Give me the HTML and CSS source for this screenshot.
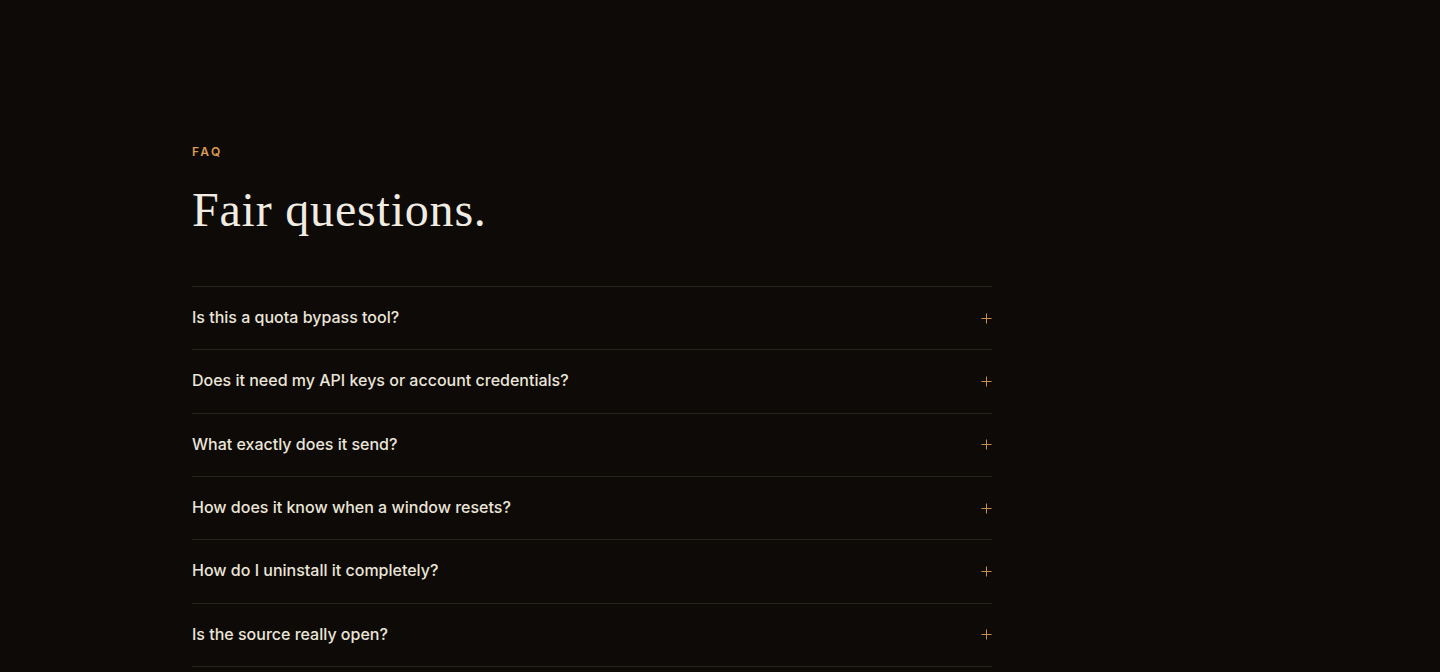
FILE: index.html
```html
<!DOCTYPE html>
<html lang="en">
<head>
<meta charset="utf-8">
<title>FAQ</title>
<link rel="stylesheet" href="styles.css">
</head>
<body>
<section class="faq">
  <div class="eyebrow">FAQ</div>
  <h2 class="title">Fair questions.</h2>
  <ul class="list">
    <li class="item"><span class="q">Is this a quota bypass tool?</span><svg class="plus" viewBox="0 0 12 12"><path d="M6 0.5V11.5M0.5 6H11.5"/></svg></li>
    <li class="item"><span class="q">Does it need my API keys or account credentials?</span><svg class="plus" viewBox="0 0 12 12"><path d="M6 0.5V11.5M0.5 6H11.5"/></svg></li>
    <li class="item"><span class="q">What exactly does it send?</span><svg class="plus" viewBox="0 0 12 12"><path d="M6 0.5V11.5M0.5 6H11.5"/></svg></li>
    <li class="item"><span class="q">How does it know when a window resets?</span><svg class="plus" viewBox="0 0 12 12"><path d="M6 0.5V11.5M0.5 6H11.5"/></svg></li>
    <li class="item"><span class="q">How do I uninstall it completely?</span><svg class="plus" viewBox="0 0 12 12"><path d="M6 0.5V11.5M0.5 6H11.5"/></svg></li>
    <li class="item"><span class="q">Is the source really open?</span><svg class="plus" viewBox="0 0 12 12"><path d="M6 0.5V11.5M0.5 6H11.5"/></svg></li>
  </ul>
</section>
</body>
</html>
```
FILE: styles.css
```css
html, body {
  margin: 0;
  padding: 0;
  background: #0d0a07;
  height: 100%;
  overflow: hidden;
}
body {
  font-family: Inter, "Liberation Sans", sans-serif;
  color: #ebe5d9;
}
.faq {
  width: 800px;
  margin-left: 192px;
  padding-top: 144px;
}
.eyebrow {
  font-size: 12px;
  line-height: 16px;
  font-weight: 600;
  letter-spacing: 2.4px;
  color: #dc9a55;
}
.title {
  margin: 23px 0 0;
  font-family: "Liberation Serif", serif;
  font-weight: 400;
  font-size: 48px;
  line-height: 53px;
  letter-spacing: 0.8px;
  color: #f1ece2;
}
.list {
  list-style: none;
  margin: 50px 0 0;
  padding: 0;
  border-bottom: 1px solid #27221c;
}
.item {
  display: flex;
  align-items: center;
  justify-content: space-between;
  border-top: 1px solid #27221c;
  padding: 20px 0 22px;
  height: 20.33px;
}
.q {
  font-size: 16px;
  font-weight: 500;
  line-height: 20px;
  color: #ebe5d9;
}
.plus {
  width: 11px;
  height: 11px;
  margin-top: 2px;
  stroke: #c98e4f;
  stroke-width: 1.1;
  fill: none;
}
```
